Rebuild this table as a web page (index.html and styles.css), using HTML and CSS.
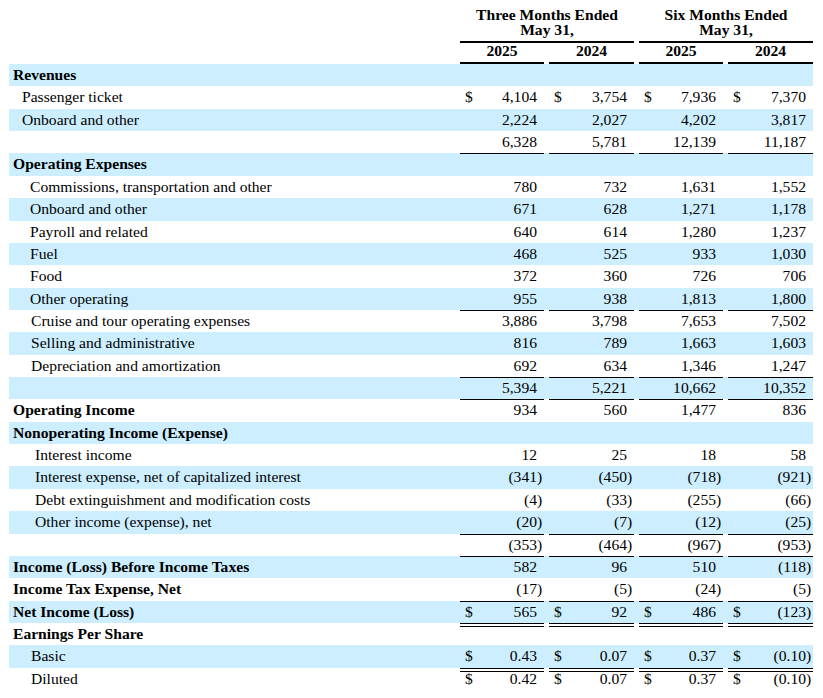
FILE: index.html
```html
<!DOCTYPE html>
<html lang="en">
<head>
  <meta charset="UTF-8">
  <meta name="viewport" content="width=device-width, initial-scale=1.0">
  <title>Consolidated Statements of Income</title>
  <link rel="stylesheet" href="styles.css">
</head>
<body>
  <div class="statement">
    <div class="head">
      <div class="row periods">
        <div></div>
        <div class="period"><div>Three Months Ended</div><div>May 31,</div></div>
        <div class="period"><div>Six Months Ended</div><div>May 31,</div></div>
      </div>
      <div class="row years">
        <div></div>
        <div class="year">2025</div>
        <div class="year">2024</div>
        <div class="year">2025</div>
        <div class="year">2024</div>
      </div>
    </div>

    <div class="lines">
      <div class="row">
        <div class="label section">Revenues</div>
        <div class="val"></div><div class="val"></div><div class="val"></div><div class="val"></div>
      </div>
      <div class="row">
        <div class="label lvl1">Passenger ticket</div>
        <div class="val"><span class="cur">$</span><span class="num">4,104</span></div>
        <div class="val"><span class="cur">$</span><span class="num">3,754</span></div>
        <div class="val"><span class="cur">$</span><span class="num">7,936</span></div>
        <div class="val"><span class="cur">$</span><span class="num">7,370</span></div>
      </div>
      <div class="row">
        <div class="label lvl1">Onboard and other</div>
        <div class="val"><span class="num">2,224</span></div>
        <div class="val"><span class="num">2,027</span></div>
        <div class="val"><span class="num">4,202</span></div>
        <div class="val"><span class="num">3,817</span></div>
      </div>
      <div class="row">
        <div class="label"></div>
        <div class="val line"><span class="num">6,328</span></div>
        <div class="val line"><span class="num">5,781</span></div>
        <div class="val line"><span class="num">12,139</span></div>
        <div class="val line"><span class="num">11,187</span></div>
      </div>

      <div class="row">
        <div class="label section">Operating Expenses</div>
        <div class="val"></div><div class="val"></div><div class="val"></div><div class="val"></div>
      </div>
      <div class="row">
        <div class="label lvl2">Commissions, transportation and other</div>
        <div class="val"><span class="num">780</span></div>
        <div class="val"><span class="num">732</span></div>
        <div class="val"><span class="num">1,631</span></div>
        <div class="val"><span class="num">1,552</span></div>
      </div>
      <div class="row">
        <div class="label lvl2">Onboard and other</div>
        <div class="val"><span class="num">671</span></div>
        <div class="val"><span class="num">628</span></div>
        <div class="val"><span class="num">1,271</span></div>
        <div class="val"><span class="num">1,178</span></div>
      </div>
      <div class="row">
        <div class="label lvl2">Payroll and related</div>
        <div class="val"><span class="num">640</span></div>
        <div class="val"><span class="num">614</span></div>
        <div class="val"><span class="num">1,280</span></div>
        <div class="val"><span class="num">1,237</span></div>
      </div>
      <div class="row">
        <div class="label lvl2">Fuel</div>
        <div class="val"><span class="num">468</span></div>
        <div class="val"><span class="num">525</span></div>
        <div class="val"><span class="num">933</span></div>
        <div class="val"><span class="num">1,030</span></div>
      </div>
      <div class="row">
        <div class="label lvl2">Food</div>
        <div class="val"><span class="num">372</span></div>
        <div class="val"><span class="num">360</span></div>
        <div class="val"><span class="num">726</span></div>
        <div class="val"><span class="num">706</span></div>
      </div>
      <div class="row">
        <div class="label lvl2">Other operating</div>
        <div class="val line"><span class="num">955</span></div>
        <div class="val line"><span class="num">938</span></div>
        <div class="val line"><span class="num">1,813</span></div>
        <div class="val line"><span class="num">1,800</span></div>
      </div>
      <div class="row">
        <div class="label lvl2b">Cruise and tour operating expenses</div>
        <div class="val"><span class="num">3,886</span></div>
        <div class="val"><span class="num">3,798</span></div>
        <div class="val"><span class="num">7,653</span></div>
        <div class="val"><span class="num">7,502</span></div>
      </div>
      <div class="row">
        <div class="label lvl2b">Selling and administrative</div>
        <div class="val"><span class="num">816</span></div>
        <div class="val"><span class="num">789</span></div>
        <div class="val"><span class="num">1,663</span></div>
        <div class="val"><span class="num">1,603</span></div>
      </div>
      <div class="row">
        <div class="label lvl2b">Depreciation and amortization</div>
        <div class="val line"><span class="num">692</span></div>
        <div class="val line"><span class="num">634</span></div>
        <div class="val line"><span class="num">1,346</span></div>
        <div class="val line"><span class="num">1,247</span></div>
      </div>
      <div class="row">
        <div class="label"></div>
        <div class="val line"><span class="num">5,394</span></div>
        <div class="val line"><span class="num">5,221</span></div>
        <div class="val line"><span class="num">10,662</span></div>
        <div class="val line"><span class="num">10,352</span></div>
      </div>
      <div class="row">
        <div class="label section">Operating Income</div>
        <div class="val"><span class="num">934</span></div>
        <div class="val"><span class="num">560</span></div>
        <div class="val"><span class="num">1,477</span></div>
        <div class="val"><span class="num">836</span></div>
      </div>

      <div class="row">
        <div class="label section">Nonoperating Income (Expense)</div>
        <div class="val"></div><div class="val"></div><div class="val"></div><div class="val"></div>
      </div>
      <div class="row">
        <div class="label lvl3">Interest income</div>
        <div class="val"><span class="num">12</span></div>
        <div class="val"><span class="num">25</span></div>
        <div class="val"><span class="num">18</span></div>
        <div class="val"><span class="num">58</span></div>
      </div>
      <div class="row">
        <div class="label lvl3">Interest expense, net of capitalized interest</div>
        <div class="val"><span class="num">(341<span class="rp">)</span></span></div>
        <div class="val"><span class="num">(450<span class="rp">)</span></span></div>
        <div class="val"><span class="num">(718<span class="rp">)</span></span></div>
        <div class="val"><span class="num">(921<span class="rp">)</span></span></div>
      </div>
      <div class="row">
        <div class="label lvl3">Debt extinguishment and modification costs</div>
        <div class="val"><span class="num">(4<span class="rp">)</span></span></div>
        <div class="val"><span class="num">(33<span class="rp">)</span></span></div>
        <div class="val"><span class="num">(255<span class="rp">)</span></span></div>
        <div class="val"><span class="num">(66<span class="rp">)</span></span></div>
      </div>
      <div class="row">
        <div class="label lvl3">Other income (expense), net</div>
        <div class="val line"><span class="num">(20<span class="rp">)</span></span></div>
        <div class="val line"><span class="num">(7<span class="rp">)</span></span></div>
        <div class="val line"><span class="num">(12<span class="rp">)</span></span></div>
        <div class="val line"><span class="num">(25<span class="rp">)</span></span></div>
      </div>
      <div class="row">
        <div class="label"></div>
        <div class="val line"><span class="num">(353<span class="rp">)</span></span></div>
        <div class="val line"><span class="num">(464<span class="rp">)</span></span></div>
        <div class="val line"><span class="num">(967<span class="rp">)</span></span></div>
        <div class="val line"><span class="num">(953<span class="rp">)</span></span></div>
      </div>

      <div class="row">
        <div class="label section">Income (Loss) Before Income Taxes</div>
        <div class="val"><span class="num">582</span></div>
        <div class="val"><span class="num">96</span></div>
        <div class="val"><span class="num">510</span></div>
        <div class="val"><span class="num">(118<span class="rp">)</span></span></div>
      </div>
      <div class="row">
        <div class="label section">Income Tax Expense, Net</div>
        <div class="val line"><span class="num">(17<span class="rp">)</span></span></div>
        <div class="val line"><span class="num">(5<span class="rp">)</span></span></div>
        <div class="val line"><span class="num">(24<span class="rp">)</span></span></div>
        <div class="val line"><span class="num">(5<span class="rp">)</span></span></div>
      </div>
      <div class="row">
        <div class="label section">Net Income (Loss)</div>
        <div class="val dbl"><span class="cur">$</span><span class="num">565</span></div>
        <div class="val dbl"><span class="cur">$</span><span class="num">92</span></div>
        <div class="val dbl"><span class="cur">$</span><span class="num">486</span></div>
        <div class="val dbl"><span class="cur">$</span><span class="num">(123<span class="rp">)</span></span></div>
      </div>

      <div class="row">
        <div class="label section">Earnings Per Share</div>
        <div class="val"></div><div class="val"></div><div class="val"></div><div class="val"></div>
      </div>
      <div class="row">
        <div class="label lvl2b">Basic</div>
        <div class="val dbl"><span class="cur">$</span><span class="num">0.43</span></div>
        <div class="val dbl"><span class="cur">$</span><span class="num">0.07</span></div>
        <div class="val dbl"><span class="cur">$</span><span class="num">0.37</span></div>
        <div class="val dbl"><span class="cur">$</span><span class="num">(0.10<span class="rp">)</span></span></div>
      </div>
      <div class="row">
        <div class="label lvl2b">Diluted</div>
        <div class="val dbl"><span class="cur">$</span><span class="num">0.42</span></div>
        <div class="val dbl"><span class="cur">$</span><span class="num">0.07</span></div>
        <div class="val dbl"><span class="cur">$</span><span class="num">0.37</span></div>
        <div class="val dbl"><span class="cur">$</span><span class="num">(0.10<span class="rp">)</span></span></div>
      </div>
    </div>
  </div>
</body>
</html>
```

FILE: styles.css
```css
* {
  box-sizing: border-box;
}

body {
  margin: 0;
  background: #fff;
  color: #000;
  font-family: "Liberation Serif", "Times New Roman", serif;
  font-size: 15.6px;
}

.statement {
  width: 813px;
  padding-left: 9px;
}

.row {
  display: grid;
  grid-template-columns: 446px 84px 85px 84px 85px;
  column-gap: 5px;
  height: 22.36px;
  line-height: 22.36px;
}

/* header */
.head {
  font-weight: bold;
}

.head .row {
  height: auto;
}

.period {
  grid-column: span 2;
  text-align: center;
  line-height: 15.5px;
  padding: 6.5px 0 3.5px;
  border-bottom: 2px solid #000;
}

.year {
  text-align: center;
  line-height: 16px;
  padding-bottom: 3px;
  border-bottom: 2px solid #000;
}

/* body rows */
.lines .row:nth-child(odd) {
  background: #cceeff;
}

.label {
  white-space: nowrap;
  padding-left: 4px;
}

.section {
  font-weight: bold;
}

.lvl1 {
  padding-left: 13px;
}

.lvl2 {
  padding-left: 21px;
}

.lvl2b {
  padding-left: 22px;
}

.lvl3 {
  padding-left: 26px;
}

.val {
  display: flex;
  padding: 0 7px 0 5px;
  white-space: nowrap;
}

.val .num {
  margin-left: auto;
}

.rp {
  margin-right: -5.2px;
}

.val.line {
  border-bottom: 1px solid #000;
}

.val.dbl {
  border-bottom: 4px double #000;
}
```
